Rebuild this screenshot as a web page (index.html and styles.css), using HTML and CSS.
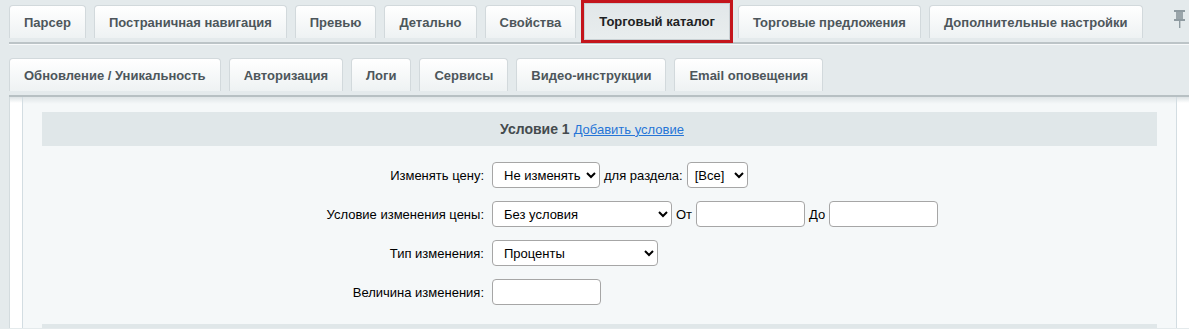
FILE: index.html
```html
<!DOCTYPE html>
<html lang="ru">
<head>
<meta charset="utf-8">
<title>Торговый каталог</title>
<link rel="stylesheet" href="styles.css">
</head>
<body>
<div class="page">
  <div class="tabbar tabbar-top">
    <div class="tab">Парсер</div>
    <div class="tab">Постраничная навигация</div>
    <div class="tab">Превью</div>
    <div class="tab">Детально</div>
    <div class="tab">Свойства</div>
    <div class="tab tab-active">Торговый каталог</div>
    <div class="tab">Торговые предложения</div>
    <div class="tab">Дополнительные настройки</div>
    <div class="pin">
      <svg width="11" height="18" viewBox="0 0 11 18">
        <rect x="0" y="0" width="11" height="2" fill="#8f9ba1"/>
        <rect x="2" y="2" width="7" height="7" fill="#9aa5aa"/>
        <rect x="0" y="9" width="11" height="2" fill="#8f9ba1"/>
        <rect x="5" y="11" width="1.4" height="7" fill="#8f9ba1"/>
      </svg>
    </div>
  </div>
  <div class="sep"></div>
  <div class="tabbar tabbar-second">
    <div class="tab">Обновление / Уникальность</div>
    <div class="tab">Авторизация</div>
    <div class="tab">Логи</div>
    <div class="tab">Сервисы</div>
    <div class="tab">Видео-инструкции</div>
    <div class="tab">Email оповещения</div>
  </div>
  <div class="sep sep-second"></div>
  <div class="content">
    <div class="panel">
      <div class="heading"><b>Условие 1</b> <a href="#" class="add-link">Добавить условие</a></div>
      <div class="form">
        <div class="row">
          <div class="label">Изменять цену:</div>
          <div class="field">
            <select class="sel sel-change"><option>Не изменять</option></select>
            <span class="txt">для раздела:</span>
            <select class="sel sel-section"><option>[Все]</option></select>
          </div>
        </div>
        <div class="row">
          <div class="label">Условие изменения цены:</div>
          <div class="field">
            <select class="sel sel-cond"><option>Без условия</option></select>
            <span class="txt">От</span>
            <input class="inp" type="text">
            <span class="txt">До</span>
            <input class="inp" type="text">
          </div>
        </div>
        <div class="row">
          <div class="label">Тип изменения:</div>
          <div class="field">
            <select class="sel sel-type"><option>Проценты</option></select>
          </div>
        </div>
        <div class="row">
          <div class="label">Величина изменения:</div>
          <div class="field">
            <input class="inp" type="text">
          </div>
        </div>
      </div>
      <div class="heading heading-next"></div>
    </div>
  </div>
</div>
</body>
</html>
```

FILE: styles.css
```css
html, body {
  margin: 0;
  padding: 0;
}
body {
  background: #e4eaec;
  font-family: "Liberation Sans", Arial, sans-serif;
  font-size: 13px;
  color: #000;
  height: 329px;
  overflow: hidden;
}
.page {
  padding-left: 9px;
}
.tabbar {
  display: flex;
  gap: 8px;
  align-items: flex-start;
  height: 33px;
}
.tabbar-top {
  padding-top: 5px;
}
.tabbar-second {
  padding-top: 13px;
}
.tab {
  position: relative;
  box-sizing: border-box;
  height: 33px;
  padding: 0 14px;
  display: flex;
  align-items: center;
  border: 1px solid #d2d9dc;
  border-bottom: none;
  border-radius: 4px 4px 0 0;
  background: linear-gradient(#ffffff, #eef2f3);
  font-weight: bold;
  font-size: 13px;
  color: #4d565b;
  white-space: nowrap;
}
.tab-active {
  z-index: 2;
  margin-top: -2px;
  height: 37px;
  border: 1px solid #c9d1d4;
  border-radius: 0;
  background: linear-gradient(#e2e7e9, #e8edee);
  outline: 3px solid #c4151c;
  color: #1e2224;
}
.pin {
  margin-left: auto;
  padding-top: 5px;
  padding-right: 4px;
  line-height: 0;
}
.sep {
  margin-top: 4px;
  height: 2px;
  background: #bcc4c7;
  border-bottom: 1px solid #f7f9fa;
}
.sep-second {
  margin-top: 4px;
  border-bottom: none;
  background: #b7c0c3;
}
.content {
  border-left: 1px solid #d3dbde;
  background: linear-gradient(#dde3e5, #ffffff 6px);
  padding: 0 12px 0 12px;
  height: 231px;
}
.panel {
  box-sizing: border-box;
  height: 100%;
  border-left: 1px solid #d3dde2;
  border-right: 1px solid #d3dde2;
  background: linear-gradient(#dfe5e7, #f5f8f9 7px);
  padding: 15px 19px 0 19px;
  overflow: hidden;
}
.heading {
  box-sizing: border-box;
  height: 34px;
  background: #e0e7e9;
  display: flex;
  align-items: center;
  justify-content: center;
  gap: 4px;
  padding-right: 15px;
  font-size: 13px;
  color: #444b4e;
}
.heading b {
  font-weight: bold;
  font-size: 14px;
}
.add-link {
  color: #2675d7;
  text-decoration: underline;
}
.heading-next {
  margin-top: 19px;
}
.form {
  display: flex;
  flex-direction: column;
  gap: 13px;
  padding-top: 16px;
}
.row {
  display: grid;
  grid-template-columns: 446px 1fr;
  align-items: center;
  height: 26px;
}
.label {
  text-align: right;
  padding-right: 4px;
  white-space: nowrap;
}
.field {
  display: flex;
  align-items: center;
  gap: 4px;
  padding-left: 4px;
}
.txt {
  white-space: nowrap;
}
.sel {
  box-sizing: border-box;
  height: 26px;
  font-family: "Liberation Sans", Arial, sans-serif;
  font-size: 13px;
  color: #000;
  background-color: #fff;
  border: 1px solid #a6a6a6;
  border-radius: 4px;
  padding: 0 0 0 7px;
}
.sel-change { width: 108px; }
.sel-section { width: 61px; padding-left: 3px; }
.sel-cond { width: 180px; }
.sel-type { width: 166px; }
.inp {
  box-sizing: border-box;
  width: 109px;
  height: 26px;
  border: 1px solid #a6a6a6;
  border-radius: 4px;
  background: #fff;
  padding: 0 4px;
  font-family: "Liberation Sans", Arial, sans-serif;
  font-size: 13px;
}
```
